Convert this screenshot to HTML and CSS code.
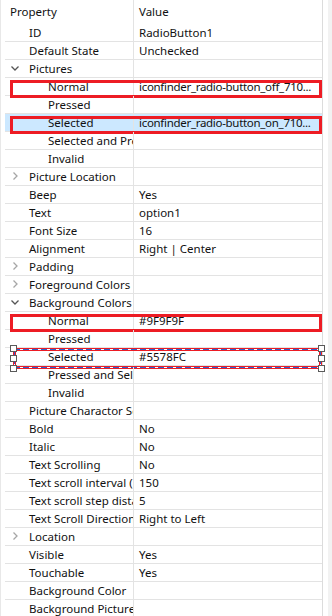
FILE: index.html
```html
<!DOCTYPE html>
<html lang="en">
<head>
    <meta charset="UTF-8">
    <meta name="viewport" content="width=device-width, initial-scale=1.0">
    <title>Properties</title>
    <link rel="stylesheet" href="styles.css">
</head>
<body>
    <div class="panel">
        <div class="tree">
            <div class="head">
                <div class="name">Property</div>
                <div class="value">Value</div>
            </div>

            <div class="row"><div class="name"><span class="twisty"></span>ID</div><div class="value">RadioButton1</div></div>
            <div class="row"><div class="name"><span class="twisty"></span>Default State</div><div class="value">Unchecked</div></div>
            <div class="row"><div class="name"><span class="twisty"><svg width="10" height="17" viewBox="0 0 10 17"><path d="M0.5 6.5 L4 10 L7.5 6.5" class="open"/></svg></span>Pictures</div><div class="value"></div></div>
            <div class="row mark"><div class="name sub"><span class="twisty"></span>Normal</div><div class="value file">iconfinder_radio-button_off_710...</div></div>
            <div class="row"><div class="name sub"><span class="twisty"></span>Pressed</div><div class="value"></div></div>
            <div class="row mark picked"><div class="name sub"><span class="twisty"></span>Selected</div><div class="value file">iconfinder_radio-button_on_710...</div></div>
            <div class="row"><div class="name sub"><span class="twisty"></span>Selected and Pressed</div><div class="value"></div></div>
            <div class="row"><div class="name sub"><span class="twisty"></span>Invalid</div><div class="value"></div></div>
            <div class="row"><div class="name"><span class="twisty"><svg width="10" height="17" viewBox="0 0 10 17"><path d="M2.5 4.5 L6 8 L2.5 11.5" class="shut"/></svg></span>Picture Location</div><div class="value"></div></div>
            <div class="row"><div class="name"><span class="twisty"></span>Beep</div><div class="value">Yes</div></div>
            <div class="row"><div class="name"><span class="twisty"></span>Text</div><div class="value">option1</div></div>
            <div class="row"><div class="name"><span class="twisty"></span>Font Size</div><div class="value">16</div></div>
            <div class="row"><div class="name"><span class="twisty"></span>Alignment</div><div class="value">Right | Center</div></div>
            <div class="row"><div class="name"><span class="twisty"><svg width="10" height="17" viewBox="0 0 10 17"><path d="M2.5 4.5 L6 8 L2.5 11.5" class="shut"/></svg></span>Padding</div><div class="value"></div></div>
            <div class="row"><div class="name"><span class="twisty"><svg width="10" height="17" viewBox="0 0 10 17"><path d="M2.5 4.5 L6 8 L2.5 11.5" class="shut"/></svg></span>Foreground Colors</div><div class="value"></div></div>
            <div class="row"><div class="name"><span class="twisty"><svg width="10" height="17" viewBox="0 0 10 17"><path d="M0.5 6.5 L4 10 L7.5 6.5" class="open"/></svg></span>Background Colors</div><div class="value"></div></div>
            <div class="row mark"><div class="name sub"><span class="twisty"></span>Normal</div><div class="value">#9F9F9F</div></div>
            <div class="row"><div class="name sub"><span class="twisty"></span>Pressed</div><div class="value"></div></div>
            <div class="row focus"><div class="name sub"><span class="twisty"></span>Selected</div><div class="value">#5578FC</div>
                <span class="grip tl"></span><span class="grip ml"></span><span class="grip bl"></span>
                <span class="grip tr"></span><span class="grip mr"></span><span class="grip br"></span>
            </div>
            <div class="row"><div class="name sub"><span class="twisty"></span>Pressed and Selected</div><div class="value"></div></div>
            <div class="row"><div class="name sub"><span class="twisty"></span>Invalid</div><div class="value"></div></div>
            <div class="row"><div class="name"><span class="twisty"></span>Picture Charactor Set</div><div class="value"></div></div>
            <div class="row"><div class="name"><span class="twisty"></span>Bold</div><div class="value">No</div></div>
            <div class="row"><div class="name"><span class="twisty"></span>Italic</div><div class="value">No</div></div>
            <div class="row"><div class="name"><span class="twisty"></span>Text Scrolling</div><div class="value">No</div></div>
            <div class="row"><div class="name"><span class="twisty"></span>Text scroll interval (ms)</div><div class="value">150</div></div>
            <div class="row"><div class="name"><span class="twisty"></span>Text scroll step distance</div><div class="value">5</div></div>
            <div class="row"><div class="name"><span class="twisty"></span>Text Scroll Direction</div><div class="value">Right to Left</div></div>
            <div class="row"><div class="name"><span class="twisty"><svg width="10" height="17" viewBox="0 0 10 17"><path d="M2.5 4.5 L6 8 L2.5 11.5" class="shut"/></svg></span>Location</div><div class="value"></div></div>
            <div class="row"><div class="name"><span class="twisty"></span>Visible</div><div class="value">Yes</div></div>
            <div class="row"><div class="name"><span class="twisty"></span>Touchable</div><div class="value">Yes</div></div>
            <div class="row"><div class="name"><span class="twisty"></span>Background Color</div><div class="value"></div></div>
            <div class="row"><div class="name"><span class="twisty"></span>Background Picture</div><div class="value"></div></div>
            <div class="row"><div class="name"><span class="twisty"></span></div><div class="value"></div></div>
        </div>
        <div class="edge"></div>
    </div>
</body>
</html>
```

FILE: styles.css
```css
html, body {
    margin: 0;
    padding: 0;
    background: #fff;
    height: 616px;
    overflow: hidden;
}

body {
    font-family: 'Noto Sans', 'Noto Sans CJK KR', sans-serif;
    font-size: 11.5px;
    color: #111;
}

.panel {
    display: flex;
    height: 616px;
}

.tree {
    width: 323px;
    padding-left: 4px;
    border-left: 1px solid #e8e8e8;
    border-right: 1px solid #dcdcdc;
    box-sizing: border-box;
}

.edge {
    margin-left: 5px;
    width: 4px;
    background: #f2f2f2;
}

.head,
.row {
    display: grid;
    grid-template-columns: 129px 1fr;
    position: relative;
}

.head {
    height: 24px;
    line-height: 24px;
}

.row {
    height: 18px;
    line-height: 18px;
    border-bottom: 1px solid #e3e3e3;
    box-sizing: border-box;
}

.name {
    display: flex;
    align-items: center;
    padding-left: 6px;
    border-right: 1px solid #e3e3e3;
    white-space: nowrap;
    overflow: hidden;
}

.head .name {
    padding-left: 5px;
}

.name.sub {
    padding-left: 25px;
}

.value {
    padding-left: 5px;
    white-space: nowrap;
    overflow: hidden;
}

.value.file {
    letter-spacing: -0.3px;
}

.twisty {
    flex: none;
    width: 18px;
    height: 17px;
}

.twisty svg {
    display: block;
}

.open {
    fill: none;
    stroke: #555;
    stroke-width: 1.3;
}

.shut {
    fill: none;
    stroke: #a6a6a6;
    stroke-width: 1.3;
}

.picked {
    background: #cce8ff;
}

.mark::after {
    content: "";
    position: absolute;
    top: 2px;
    left: 5px;
    right: 0;
    height: 18px;
    border: 3px solid #ed1c24;
    box-sizing: border-box;
}

/* selection frame: red line, blue dashes, red line */
.focus::after {
    content: "";
    position: absolute;
    top: 0;
    left: 8px;
    right: 0;
    height: 21px;
    border: 1px solid #ed1c24;
    box-sizing: border-box;
    background:
        repeating-linear-gradient(90deg, #2a5fd0 0 6px, #fff 6px 9px) left top / 100% 1px no-repeat,
        repeating-linear-gradient(90deg, #2a5fd0 0 6px, #fff 6px 9px) left bottom / 100% 1px no-repeat,
        repeating-linear-gradient(180deg, #2a5fd0 0 6px, #fff 6px 9px) left top / 1px 100% no-repeat,
        repeating-linear-gradient(180deg, #2a5fd0 0 6px, #fff 6px 9px) right top / 1px 100% no-repeat;
}

.focus::before {
    content: "";
    position: absolute;
    top: 2px;
    left: 10px;
    right: 2px;
    height: 17px;
    border: 1px solid #ed1c24;
    box-sizing: border-box;
    z-index: 1;
}

.grip {
    position: absolute;
    width: 5px;
    height: 5px;
    border: 1px solid #5a5a5a;
    background: #fff;
    z-index: 2;
}

.grip.tl, .grip.tr { top: -3px; }
.grip.ml, .grip.mr { top: 7px; }
.grip.bl, .grip.br { top: 17px; }
.grip.tl, .grip.ml, .grip.bl { left: 5px; }
.grip.tr, .grip.mr, .grip.br { right: -3px; }
```
